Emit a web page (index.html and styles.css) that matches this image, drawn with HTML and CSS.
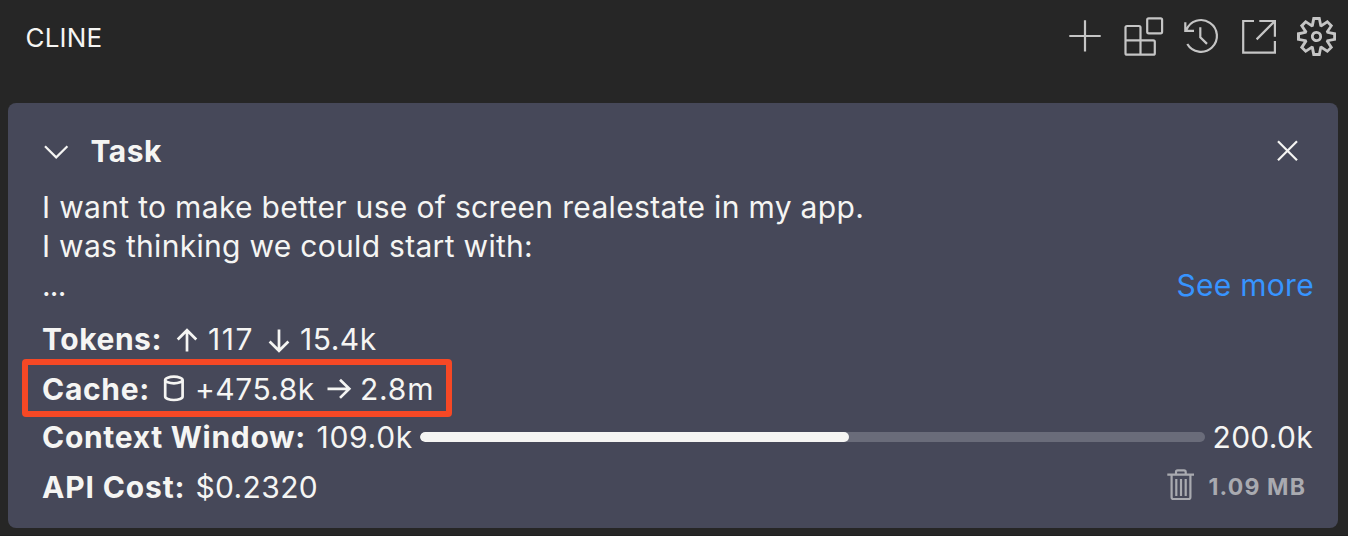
FILE: index.html
```html
<!DOCTYPE html>
<html lang="en">
<head>
<meta charset="utf-8">
<title>Cline</title>
<link rel="stylesheet" href="styles.css">
</head>
<body>
<header class="header">
  <h1 class="brand">CLINE</h1>
  <nav class="actions">
    <svg class="icon" width="40" height="40" viewBox="1065 17 40 40"><path d="M1069.3 36h31.4M1085 20.3v31.2"/></svg>
    <svg class="icon" width="40" height="42" viewBox="1123 16 40 42"><path d="M1127 26h12q1.500 0 1.500 1.500V40.300H1153.300q1.500 0 1.500 1.500V53.200q0 1.500-1.500 1.500H1127q-1.500 0-1.500-1.500V27.500q0-1.500 1.500-1.500zM1125.500 40.300h15v14.400"/><rect x="1147.200" y="18.300" width="14.900" height="15" rx="1.500"/></svg>
    <svg class="icon" width="40" height="40" viewBox="1181 17 40 40"><path d="M1185.300 22.300V30.800h8.700M1186.200 30.200A15.900 15.900 0 1 1 1187.300 44M1200.300 27.300v10l6.700 6.600"/></svg>
    <svg class="icon" width="40" height="40" viewBox="1239 17 40 40"><path d="M1254 21h-10.800v31.600h31.700V41M1259.300 21h15.600v15.700M1256.600 39.400L1274.900 21"/></svg>
    <svg class="gear" width="39" height="39" viewBox="0 0 24 24"><path fill-rule="evenodd" d="M19.85 8.75l4.15.83v4.84l-4.15.83 2.35 3.52-3.43 3.43-3.52-2.35-.83 4.15H9.58l-.83-4.15-3.52 2.35-3.43-3.43 2.35-3.52L0 14.42V9.58l4.15-.83L1.8 5.23 5.23 1.8l3.52 2.35L9.58 0h4.84l.83 4.15 3.52-2.35 3.43 3.43-2.35 3.52zm-1.57 5.07l4-.81v-2l-4-.81-.54-1.3 2.29-3.43-1.43-1.43-3.43 2.29-1.3-.54-.81-4h-2l-.81 4-1.3.54-3.43-2.29-1.43 1.43L6.38 8.9l-.54 1.3-4 .81v2l4 .81.54 1.3-2.29 3.43 1.43 1.43 3.43-2.29 1.3.54.81 4h2l.81-4 1.3-.54 3.43 2.29 1.43-1.43-2.29-3.43.54-1.3zm-8.186-4.672A3.43 3.43 0 0 1 12 8.57 3.44 3.44 0 0 1 15.43 12a3.43 3.43 0 1 1-5.336-2.852zm.956 4.274c.281.188.612.288.95.288A1.7 1.7 0 0 0 13.71 12a1.71 1.71 0 1 0-2.66 1.422z"/></svg>
  </nav>
</header>
<main class="card">
  <div class="task-head">
    <svg class="line-icon chevron" width="28" height="20" viewBox="42 142 28 20"><path d="M45 146.300l11.200 11.100L67.400 146.300"/></svg>
    <h2 class="title">Task</h2>
    <svg class="line-icon close" width="24" height="24" viewBox="1275 139 24 24"><path d="M1278 141.300l19 19M1297 141.300l-19 19"/></svg>
  </div>
  <div class="prompt">
    <p class="line line-1">I want to make better use of screen realestate in my app.</p>
    <p class="line line-2">I was thinking we could start with:</p>
    <p class="line last"><span class="dots">...</span><a class="more">See more</a></p>
  </div>
  <div class="row tokens">
    <b class="label">Tokens:</b>
    <svg class="bold-icon" width="24" height="26" viewBox="175 327 24 26"><path d="M187 351.500V330.500M177.700 339.500l9.300-9.300 9.300 9.300"/></svg>
    <span class="in">117</span>
    <svg class="bold-icon" width="24" height="26" viewBox="267 327 24 26"><path d="M279 329.500v21M269.600 341.500l9.400 9.300 9.400-9.300"/></svg>
    <span class="out">15.4k</span>
  </div>
  <div class="row cache">
    <b class="label">Cache:</b>
    <svg class="bold-icon" width="24" height="28" viewBox="162 374 24 28"><ellipse cx="173.900" cy="380" rx="8.700" ry="3.300"/><path d="M165.200 380v16.500c0 2 3.900 3.500 8.700 3.500s8.700-1.500 8.700-3.500V380"/></svg>
    <span class="writes">+475.8k</span>
    <svg class="bold-icon arrow-right" width="26" height="24" viewBox="325 377 26 24"><path d="M327.500 388.800h21.500M340 379.700l9.300 9.100-9.300 9.100"/></svg>
    <span class="reads">2.8m</span>
    <i class="highlight"></i>
  </div>
  <div class="row context">
    <b class="label">Context Window:</b>
    <span class="used">109.0k</span>
    <div class="bar"><div class="fill" style="width:54.600%"></div></div>
    <span class="limit">200.0k</span>
  </div>
  <div class="row cost">
    <b class="label">API Cost:</b>
    <span class="price">$0.2320</span>
    <svg class="trash" width="30" height="34" viewBox="1166 468 30 34"><path d="M1167.300 474.700h26.700M1171.600 475v22.300q0 1.700 1.700 1.700h15.400q1.700 0 1.700-1.700V475M1176 474v-2q0-1.600 1.600-1.600h6.400q1.700 0 1.700 1.600v2M1176.300 479v17M1181 479v17M1185.700 479v17"/></svg>
    <b class="size">1.09 MB</b>
  </div>
</main>
</body>
</html>
```
FILE: styles.css
```css
* { box-sizing: border-box; }
body {
  margin: 0;
  width: 1348px;
  height: 536px;
  overflow: hidden;
  background: #262626;
  border-bottom: 1px solid #202020;
  color: #f5f5f3;
  font: 30px/40px Inter, sans-serif;
}
h1, h2, p { margin: 0; }
svg { display: block; flex: none; overflow: visible; }
.header {
  display: flex;
  justify-content: space-between;
  height: 103px;
  padding: 16px 12px 0 25.500px;
}
.brand { font-size: 26px; font-weight: 400; line-height: 44px; letter-spacing: 0.200px; }
.actions { display: flex; gap: 18px; height: 42px; align-items: center; }
.icon { fill: none; stroke: #c5c5c5; stroke-width: 2.200; }
.gear { fill: #c5c5c5; margin-bottom: 1px; }
.card {
  width: 1330px;
  height: 425px;
  margin-left: 8px;
  padding: 28px 25px 0 34px;
  border-radius: 8px;
  background: #464859;
}
.task-head { display: flex; align-items: center; height: 40px; }
.title { margin-left: 20.500px; font-size: 30px; font-weight: 700; letter-spacing: 0.500px; }
.line-icon { fill: none; stroke: #f5f5f3; stroke-width: 2.200; }
.chevron { margin-top: 2px; }
.close { margin-left: auto; margin-right: 14px; }
.prompt { margin-top: 17px; line-height: 39px; }
.line { white-space: nowrap; letter-spacing: 0.300px; }
.line-1 { letter-spacing: 0.330px; }
.last { display: flex; justify-content: space-between; }
.dots { letter-spacing: -0.800px; }
.more { margin-right: -1px; color: #3794ff; }
.row { display: flex; align-items: center; height: 40px; white-space: nowrap; letter-spacing: 0.500px; }
.label { flex: none; font-weight: 700; letter-spacing: 0.700px; }
.bold-icon { fill: none; stroke: #f5f5f3; stroke-width: 2.700; }
.tokens { margin-top: 14px; }
.tokens .label { width: 133px; letter-spacing: 0.550px; }
.tokens .bold-icon { margin-top: 2px; }
.in { width: 59px; margin-left: 9px; letter-spacing: 1.500px; }
.out { margin-left: 9px; }
.cache { position: relative; margin-top: 10px; }
.cache .label { width: 120px; }
.cache .bold-icon { margin-bottom: 2px; }
.cache .arrow-right { margin-bottom: 0; }
.writes { width: 130px; margin-left: 9px; }
.reads { margin-left: 9px; letter-spacing: 0.800px; }
.highlight {
  position: absolute;
  left: -20px;
  top: -10px;
  width: 430px;
  height: 58px;
  border: 6px solid #f64825;
  border-radius: 4px;
}
.context { margin-top: 8px; }
.context .label { width: 274.500px; }
.used { width: 103.500px; letter-spacing: 0.700px; }
.bar { width: 786px; height: 10px; border-radius: 5px; background: #6a6c7a; overflow: hidden; }
.fill { height: 100%; border-radius: 5px; background: #f5f5f3; }
.limit { margin-left: 7.500px; letter-spacing: 0.300px; }
.cost { margin-top: 10px; }
.cost .label { width: 153.500px; letter-spacing: 0.850px; }
.price { letter-spacing: 0.350px; }
.trash { margin-left: auto; margin-bottom: 4px; fill: none; stroke: #a9aab0; stroke-width: 2.200; }
.size { width: 105px; margin-left: 12.500px; margin-right: -0.500px; font-size: 23px; font-weight: 700; letter-spacing: 1.150px; color: #a9aab0; }
```
